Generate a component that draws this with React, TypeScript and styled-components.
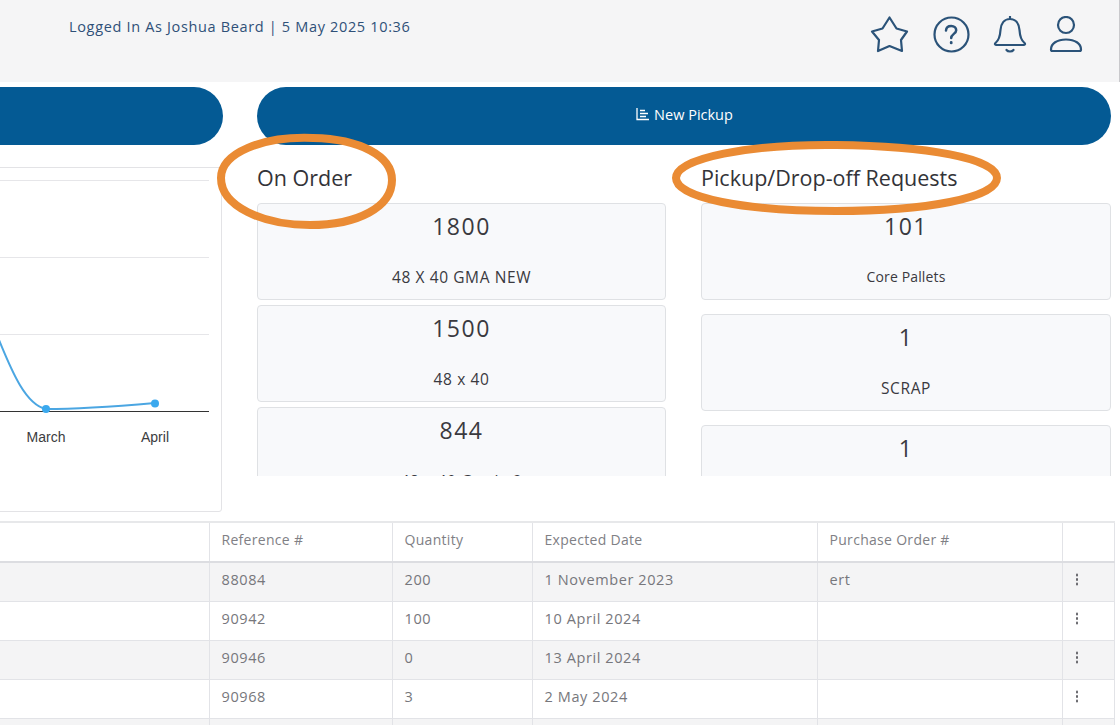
import React from 'react';
import styled, {createGlobalStyle} from 'styled-components';

const GlobalStyle = createGlobalStyle`
    html, body {
        margin: 0;
        padding: 0;
        background: #fff;
    }

    body {
        font-family: "Open Sans", "Liberation Sans", sans-serif;
    }
`;

const Page = styled.div`
    position: relative;
    width: 1120px;
    height: 725px;
    overflow: hidden;
    background: #fff;
`;

const Header = styled.header`
    height: 82px;
    box-sizing: border-box;
    padding: 16px 36px 0 69px;
    display: flex;
    justify-content: space-between;
    align-items: flex-start;
    background: #f5f5f6;
    border-right: 1px solid #c9c9cc;
`;

const LoggedIn = styled.div`
    font-size: 14.5px;
    line-height: 22px;
    letter-spacing: 0.66px;
    color: #2f5078;
`;

const IconBar = styled.div`
    display: flex;
    align-items: flex-start;
`;

const IconSlot = styled.svg<{ $w: number; $gap?: number }>`
    width: ${p => p.$w}px;
    height: 40px;
    margin-left: ${p => p.$gap ?? 0}px;
    fill: none;
    stroke: #2b5379;
    stroke-width: 2.2;
    stroke-linecap: round;
    stroke-linejoin: round;
`;

const ButtonRow = styled.div`
    margin-top: 5px;
    display: grid;
    grid-template-columns: 263px 854px;
    gap: 34px;
    margin-left: -40px;
`;

const BigButton = styled.button`
    height: 58px;
    padding: 0 0 4px;
    border: 0;
    border-radius: 29px;
    background: #045a94;
    color: #fff;
    font-family: inherit;
    font-size: 14.5px;
    display: flex;
    align-items: center;
    justify-content: center;
    gap: 3px;
`;

const Middle = styled.div`
    display: grid;
    grid-template-columns: 262px 409px 410px;
    column-gap: 35px;
    margin-left: -40px;
    height: 376px;
`;

const ChartCard = styled.div`
    margin-top: 22px;
    height: 345px;
    box-sizing: border-box;
    border: 1px solid #e3e3e6;
    border-radius: 3px;
`;

const ChartSvg = styled.svg`
    display: block;
    width: 260px;
    height: 343px;
`;

const ChartLabel = styled.text`
    font-family: "Liberation Sans", sans-serif;
    font-size: 14px;
    fill: #3c3c40;
    text-anchor: middle;
`;

const Column = styled.section`
    display: flex;
    flex-direction: column;
    min-width: 0;
`;

const ColumnTitle = styled.h2`
    margin: 0;
    height: 58px;
    padding-top: 19px;
    box-sizing: border-box;
    font-size: 21.5px;
    line-height: 28px;
    font-weight: 400;
    color: #333338;
`;

const CardList = styled.div<{ $gap: number }>`
    height: 273px;
    overflow: hidden;
    display: flex;
    flex-direction: column;
    gap: ${p => p.$gap}px;
`;

const StatCard = styled.div`
    flex: 0 0 96.5px;
    box-sizing: border-box;
    border: 1px solid #dfe1e4;
    border-radius: 4px;
    background: #f8f9fb;
    text-align: center;
    color: #3a3a3f;
`;

const StatValue = styled.div`
    margin-top: 6px;
    font-size: 23px;
    line-height: 32px;
    letter-spacing: 1.5px;
`;

const StatLabel = styled.div<{ $wide?: boolean }>`
    margin-top: 25px;
    font-size: ${p => (p.$wide ? '15.5px' : '14px')};
    line-height: 20px;
    letter-spacing: ${p => (p.$wide ? '0.6px' : '0.15px')};
`;

const Table = styled.table`
    margin: 0 0 0 -10px;
    width: 1124px;
    border-collapse: collapse;
    table-layout: fixed;
    border-top: 2px solid #e7e8ea;
    border-right: 1px solid #e2e3e7;
    font-size: 14.5px;
    color: #77777c;
`;

const HeadCell = styled.th`
    height: 32px;
    padding: 0 11.5px 6px;
    text-align: left;
    font-size: 14px;
    font-weight: 400;
    letter-spacing: 0.3px;
    color: #808085;
    border-left: 1px solid #e2e3e7;
    border-bottom: 2px solid #dcdde1;
`;

const Row = styled.tr<{ $alt: boolean }>`
    background: ${p => (p.$alt ? '#f4f4f5' : '#fff')};
`;

const Cell = styled.td`
    height: 33px;
    padding: 0 11.5px 5px;
    letter-spacing: 0.6px;
    border-left: 1px solid #e2e3e7;
    border-bottom: 1px solid #e2e3e7;
`;

const Dots = styled.span`
    display: block;
    width: 2.5px;
    height: 2.5px;
    margin-left: 1px;
    border-radius: 50%;
    background: #66666b;
    box-shadow: 0 -4.5px 0 #66666b, 0 4.5px 0 #66666b;
`;

const Annotation = styled.svg`
    position: absolute;
    left: 0;
    top: 0;
    width: 1120px;
    height: 725px;
    pointer-events: none;
    fill: none;
    stroke: #ea8b34;
    stroke-width: 8;
`;

const onOrder = [
    {value: '1800', label: '48 X 40 GMA NEW', wide: true},
    {value: '1500', label: '48 x 40', wide: true},
    {value: '844', label: '48 x 40 Grade 2', wide: true},
];

const requests = [
    {value: '101', label: 'Core Pallets', wide: false},
    {value: '1', label: 'SCRAP', wide: true},
    {value: '1', label: 'Core Pallets', wide: false},
];

const rows = [
    ['88084', '200', '1 November 2023', 'ert'],
    ['90942', '100', '10 April 2024', ''],
    ['90946', '0', '13 April 2024', ''],
    ['90968', '3', '2 May 2024', ''],
    ['90970', '12', '3 May 2024', ''],
];

const StatColumn = ({title, items, gap}: { title: string; items: typeof onOrder; gap: number }) => (
    <Column>
        <ColumnTitle>{title}</ColumnTitle>
        <CardList $gap={gap}>
            {items.map((item, i) => (
                <StatCard key={i}>
                    <StatValue>{item.value}</StatValue>
                    <StatLabel $wide={item.wide}>{item.label}</StatLabel>
                </StatCard>
            ))}
        </CardList>
    </Column>
);

const App: React.FC = () => (
    <Page>
        <GlobalStyle/>
        <Header>
            <LoggedIn>Logged In As Joshua Beard | 5 May 2025 10:36</LoggedIn>
            <IconBar>
                <IconSlot $w={40} viewBox="0 0 40 40">
                    <path d="M20.500 1.500L27.500 12.500L38 15.500L32 24L33 35L20.500 30L9 35L10 24L3 15.500L13.500 12.500z"/>
                </IconSlot>
                <IconSlot $w={38} $gap={23} viewBox="0 0 38 40">
                    <circle cx="19.500" cy="18.500" r="17"/>
                    <path d="M14 14.500c.2-3 2.400-4.500 5.200-4.500 3 0 5 1.800 5 4.200 0 3.600-5 3.800-5 7.800" strokeWidth="2.500"/>
                    <path d="M19.200 26.500v.4" strokeWidth="2.800"/>
                </IconSlot>
                <IconSlot $w={34} $gap={23} viewBox="0 0 34 40">
                    <path d="M17 .8v2.200M17 3C11 3 8 8 7.500 14C7 22 5 25 2.500 27C1.500 28 2 29 3.500 29H30.500C32 29 32.500 28 31.500 27C29 25 27 22 26.500 14C26 8 23 3 17 3z"/>
                    <path d="M13.500 34C15 36 19 36 20.500 34"/>
                </IconSlot>
                <IconSlot $w={34} $gap={22} viewBox="0 0 34 40">
                    <circle cx="17" cy="9" r="8"/>
                    <path d="M2 33.500c0-6 6-10 15-10s15 4 15 10c0 1-.5 1.500-1.500 1.500h-27c-1 0-1.500-.5-1.500-1.500z"/>
                </IconSlot>
            </IconBar>
        </Header>
        <ButtonRow>
            <BigButton aria-label="Action"/>
            <BigButton>
                <svg width="16" height="14" viewBox="0 0 16 14" fill="none" stroke="#fff" strokeWidth="1.300">
                    <path d="M2 1v11.500h12M5 3.500h5M5 6.500h8M5 9.500h6"/>
                </svg>
                New Pickup
            </BigButton>
        </ButtonRow>
        <Middle>
            <ChartCard>
                <ChartSvg viewBox="0 0 260 343">
                    <path d="M0 12.500H248M0 89.500H248M0 166.500H248" stroke="#e6e6e9" strokeWidth="1.200"/>
                    <path d="M0 243.500H248" stroke="#333" strokeWidth="1"/>
                    <path d="M38 172C51 204 65 237 85 241C109 241 159 238 194 235" fill="none" stroke="#4ba6e2" strokeWidth="2"/>
                    <circle cx="85" cy="241" r="4" fill="#3ba9ee"/>
                    <circle cx="194" cy="235.500" r="4" fill="#3ba9ee"/>
                    <ChartLabel x="85" y="274">March</ChartLabel>
                    <ChartLabel x="194" y="274">April</ChartLabel>
                </ChartSvg>
            </ChartCard>
            <StatColumn title="On Order" items={onOrder} gap={5.5}/>
            <StatColumn title="Pickup/Drop-off Requests" items={requests} gap={14.5}/>
        </Middle>
        <Table>
            <colgroup>
                <col width="219"/>
                <col width="183"/>
                <col width="140"/>
                <col width="285"/>
                <col width="245"/>
                <col width="52"/>
            </colgroup>
            <thead>
                <tr>
                    <HeadCell/>
                    <HeadCell>Reference #</HeadCell>
                    <HeadCell>Quantity</HeadCell>
                    <HeadCell>Expected Date</HeadCell>
                    <HeadCell>Purchase Order #</HeadCell>
                    <HeadCell/>
                </tr>
            </thead>
            <tbody>
                {rows.map((row, id) => (
                    <Row key={id} $alt={id % 2 === 0}>
                        <Cell/>
                        {row.map((value, i) => (
                            <Cell key={i}>{value}</Cell>
                        ))}
                        <Cell><Dots/></Cell>
                    </Row>
                ))}
            </tbody>
        </Table>
        <Annotation viewBox="0 0 1120 725">
            <path d="M313 138C262 136 221 153 221 178C221 206 262 225 310 225C358 225 392 207 392 180C392 156 360 139 313 138z"/>
            <path d="M836 145C750 144 676 158 676 178C676 198 745 211 836 211C925 211 997 198 997 178C997 158 925 146 836 145z"/>
        </Annotation>
    </Page>
);

export default App;
